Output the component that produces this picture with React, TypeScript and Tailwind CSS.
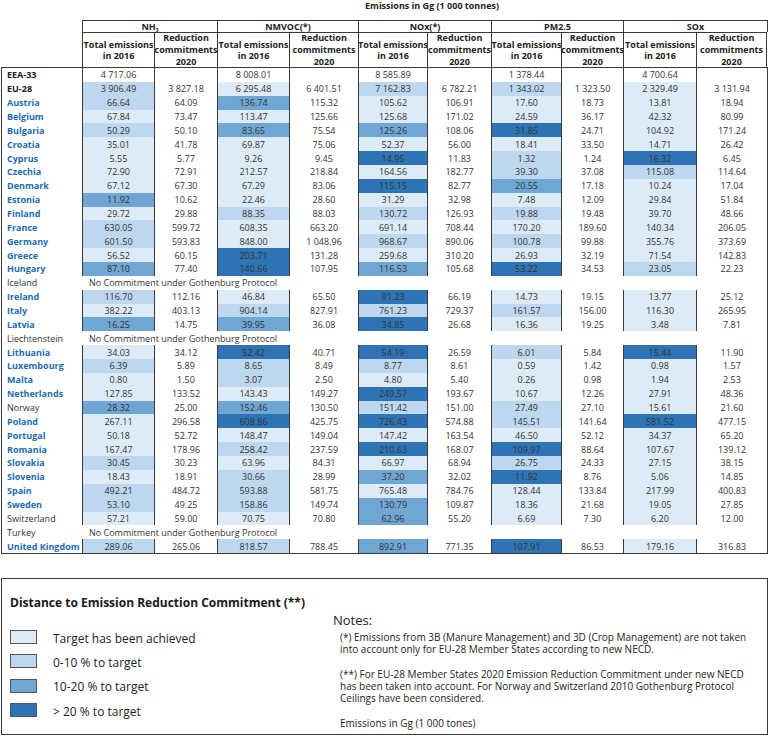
import React from 'react';

const RAW = `EEA-33|agg|4 717.06,0,|8 008.01,0,|8 585.89,0,|1 378.44,0,|4 700.64,0,
EU-28|agg|3 906.49,2,3 827.18|6 295.48,1,6 401.51|7 162.83,2,6 782.21|1 343.02,2,1 323.50|2 329.49,1,3 131.94
Austria|eu|66.64,2,64.09|136.74,3,115.32|105.62,1,106.91|17.60,1,18.73|13.81,1,18.94
Belgium|eu|67.84,1,73.47|113.47,1,125.66|125.68,1,171.02|24.59,1,36.17|42.32,1,80.99
Bulgaria|eu|50.29,2,50.10|83.65,3,75.54|125.26,3,108.06|31.85,4,24.71|104.92,1,171.24
Croatia|eu|35.01,1,41.78|69.87,1,75.06|52.37,1,56.00|18.41,1,33.50|14.71,1,26.42
Cyprus|eu|5.55,1,5.77|9.26,1,9.45|14.95,4,11.83|1.32,2,1.24|16.32,4,6.45
Czechia|eu|72.90,1,72.91|212.57,1,218.84|164.56,1,182.77|39.30,2,37.08|115.08,2,114.64
Denmark|eu|67.12,1,67.30|67.29,1,83.06|115.15,4,82.77|20.55,3,17.18|10.24,1,17.04
Estonia|eu|11.92,3,10.62|22.46,1,28.60|31.29,1,32.98|7.48,1,12.09|29.84,1,51.84
Finland|eu|29.72,1,29.88|88.35,2,88.03|130.72,2,126.93|19.88,2,19.48|39.70,1,48.66
France|eu|630.05,2,599.72|608.35,1,663.20|691.14,1,708.44|170.20,1,189.60|140.34,1,206.05
Germany|eu|601.50,2,593.83|848.00,1,1 048.96|968.67,2,890.06|100.78,2,99.88|355.76,1,373.69
Greece|eu|56.52,1,60.15|203.71,4,131.28|259.68,1,310.20|26.93,1,32.19|71.54,1,142.83
Hungary|eu|87.10,3,77.40|140.66,4,107.95|116.53,3,105.68|53.22,4,34.53|23.05,2,22.23
Iceland|nc
Ireland|eu|116.70,2,112.16|46.84,1,65.50|91.23,4,66.19|14.73,1,19.15|13.77,1,25.12
Italy|eu|382.22,1,403.13|904.14,2,827.91|761.23,2,729.37|161.57,2,156.00|116.30,1,265.95
Latvia|eu|16.25,3,14.75|39.95,3,36.08|34.85,4,26.68|16.36,1,19.25|3.48,1,7.81
Liechtenstein|nc
Lithuania|eu|34.03,1,34.12|52.42,4,40.71|54.19,4,26.59|6.01,2,5.84|15.44,4,11.90
Luxembourg|eu|6.39,2,5.89|8.65,2,8.49|8.77,2,8.61|0.59,1,1.42|0.98,1,1.57
Malta|eu|0.80,1,1.50|3.07,2,2.50|4.80,1,5.40|0.26,1,0.98|1.94,1,2.53
Netherlands|eu|127.85,1,133.52|143.43,1,149.27|249.57,4,193.67|10.67,1,12.26|27.91,1,48.36
Norway|non|28.32,3,25.00|152.46,3,130.50|151.42,2,151.00|27.49,2,27.10|15.61,1,21.60
Poland|eu|267.11,1,296.58|608.86,4,425.75|726.43,4,574.88|145.51,2,141.64|581.52,4,477.15
Portugal|eu|50.18,1,52.72|148.47,1,149.04|147.42,1,163.54|46.50,1,52.12|34.37,1,65.20
Romania|eu|167.47,1,178.96|258.42,2,237.59|210.63,4,168.07|109.97,4,88.64|107.67,1,139.12
Slovakia|eu|30.45,2,30.23|63.96,1,84.31|66.97,1,68.94|26.75,2,24.33|27.15,1,38.15
Slovenia|eu|18.43,1,18.91|30.66,2,28.99|37.20,3,32.02|11.92,4,8.76|5.06,1,14.85
Spain|eu|492.21,2,484.72|593.88,2,581.75|765.48,1,784.76|128.44,1,133.84|217.99,1,400.83
Sweden|eu|53.10,2,49.25|158.86,2,149.74|130.79,3,109.87|18.36,1,21.68|19.05,1,27.85
Switzerland|non|57.21,1,59.00|70.75,1,70.80|62.96,3,55.20|6.69,1,7.30|6.20,1,12.00
Turkey|nc
United Kingdom|eu|289.06,2,265.06|818.57,2,788.45|892.91,3,771.35|107.91,4,86.53|179.16,1,316.83`;

type Cell = { t: string; c: number; r: string };
type Row = { n: string; k: string; v: Cell[] };

const ROWS: Row[] = RAW.split('\n').map((line) => {
  const parts = line.split('|');
  const v = parts.slice(2).map((p) => {
    const [t, c, r] = p.split(',');
    return { t, c: Number(c), r: r ?? '' };
  });
  return { n: parts[0], k: parts[1], v };
});

const BG = ['bg-white', 'bg-[#ddebf7]', 'bg-[#bdd7ee]', 'bg-[#6fa6d3]', 'bg-[#2e74b5]'];
const TW = ['w-[72px]', 'w-[72px]', 'w-[69px]', 'w-[70px]', 'w-[73px]'];
const RW = ['w-[63px]', 'w-[69px]', 'w-[64px]', 'w-[62px]', 'w-[71px]'];
const GW = ['w-[135px]', 'w-[141px]', 'w-[133px]', 'w-[132px]', 'w-[145px] border-r'];

const GROUPS: React.ReactNode[] = [
  <span key="nh3">
    NH<sub className="text-[5px] align-baseline relative top-[2px]">3</sub>
  </span>,
  'NMVOC(*)',
  'NOx(*)',
  'PM2.5',
  'SOx',
];

function LabelColor(k: string) {
  if (k === 'agg') return 'font-bold text-[#1a1a1a]';
  if (k === 'eu') return 'font-bold text-[#1b6cb3]';
  return 'font-normal text-[#333]';
}

export default function App() {
  return (
    <div className="w-[768px] h-[736px] bg-white font-['Open_Sans',sans-serif] text-[#333] overflow-hidden">
      {/* title */}
      <div className="h-[20px] pl-[365px] text-[9px] leading-[12px] font-bold text-[#222] whitespace-nowrap">
        Emissions in Gg (1 000 tonnes)
      </div>

      <div className="ml-[1px] w-[767px]">
        {/* group header */}
        <div className="flex h-[12px]">
          <div className="w-[81px]" />
          {GROUPS.map((g, i) => (
            <div
              key={i}
              className={`${GW[i]} border-l border-t border-[#3a3a3a] flex items-center justify-center text-[9px] leading-none font-bold text-[#222]`}
            >
              {g}
            </div>
          ))}
        </div>
        {/* sub header */}
        <div className="flex h-[35px]">
          <div className="w-[81px]" />
          {[0, 1, 2, 3, 4].map((i) => (
            <React.Fragment key={i}>
              <div
                className={`${TW[i]} border-l border-t border-[#3a3a3a] flex items-center justify-center text-center text-[9px] leading-[11.5px] font-bold text-[#222] whitespace-nowrap`}
              >
                <span>
                  Total emissions
                  <br />
                  in 2016
                </span>
              </div>
              <div
                className={`${RW[i]} border-l border-t ${i === 4 ? 'border-r' : ''} border-[#3a3a3a] flex items-center justify-center text-center text-[9px] leading-[11.8px] font-bold text-[#222] whitespace-nowrap`}
              >
                <span>
                  Reduction
                  <br />
                  commitments
                  <br />
                  2020
                </span>
              </div>
            </React.Fragment>
          ))}
        </div>

        {/* body */}
        <div className="border border-[#3a3a3a]">
          {ROWS.map((row) => (
            <div key={row.n} className="flex h-[13.86px] text-[9px] leading-none">
              <div className={`w-[80px] pl-[5px] flex items-center whitespace-nowrap ${LabelColor(row.k)}`}>
                {row.n}
              </div>
              {row.k === 'nc' ? (
                <div className="flex-1 pl-[7px] flex items-center whitespace-nowrap text-[#333]">
                  No Commitment under Gothenburg Protocol
                </div>
              ) : (
                row.v.map((c, i) => (
                  <React.Fragment key={i}>
                    <div
                      className={`${TW[i]} ${BG[c.c]} border-l border-[#3a3a3a] flex items-center justify-center whitespace-nowrap`}
                    >
                      {c.t}
                    </div>
                    <div
                      className={`${RW[i]} border-l border-[#3a3a3a] flex items-center justify-center whitespace-nowrap`}
                    >
                      {c.r}
                    </div>
                  </React.Fragment>
                ))
              )}
            </div>
          ))}
        </div>
      </div>

      {/* legend */}
      <div className="ml-[1px] mt-[24px] w-[767px] h-[157px] border border-[#3a3a3a] flex">
        <div className="w-[331px] pl-[8px] pt-[16px]">
          <div className="text-[12px] leading-[16px] font-bold text-[#1a1a1a] whitespace-nowrap">
            Distance to Emission Reduction Commitment (**)
          </div>
          <div className="mt-[19px] flex flex-col gap-[10.4px]">
            {[
              ['bg-[#ddebf7]', 'Target has been achieved'],
              ['bg-[#bdd7ee]', '0-10 % to target'],
              ['bg-[#6fa6d3]', '10-20 % to target'],
              ['bg-[#2e74b5]', '> 20 % to target'],
            ].map(([bg, t]) => (
              <div key={t} className="flex items-center h-[14px]">
                <div className={`w-[27px] h-[14px] ${bg} border border-[#555]`} />
                <div className="ml-[16px] text-[12px] leading-[14px] pt-[3px] text-[#222] whitespace-nowrap">{t}</div>
              </div>
            ))}
          </div>
        </div>
        <div className="flex-1 pt-[33px]">
          <div className="text-[13px] leading-[16px] text-[#222]">Notes:</div>
          <div className="mt-[3px] pl-[7px] text-[10px] leading-[12.3px] text-[#222] whitespace-nowrap">
            <p>
              (*) Emissions from 3B (Manure Management) and 3D (Crop Management) are not taken
              <br />
              into account only for EU-28 Member States according to new NECD.
            </p>
            <p className="mt-[12px]">
              (**) For EU-28 Member States 2020 Emission Reduction Commitment under new NECD
              <br />
              has been taken into account. For Norway and Switzerland 2010 Gothenburg Protocol
              <br />
              Ceilings have been considered.
            </p>
            <p className="mt-[12px]">Emissions in Gg (1 000 tones)</p>
          </div>
        </div>
      </div>
    </div>
  );
}
